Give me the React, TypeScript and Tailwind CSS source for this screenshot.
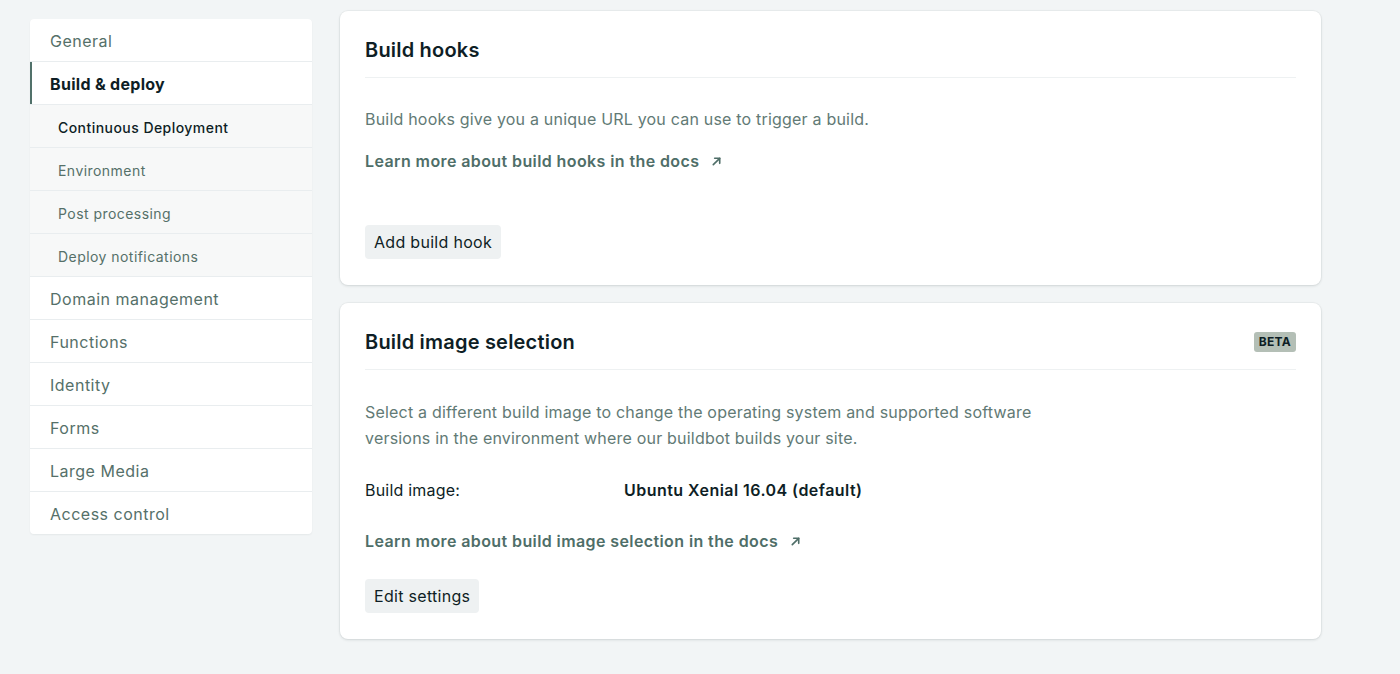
import React from 'react';

interface NavItem {
    label: string;
    sub?: boolean;
    active?: boolean;
    current?: boolean;
}

const navItems: NavItem[] = [
    { label: 'General' },
    { label: 'Build & deploy', active: true },
    { label: 'Continuous Deployment', sub: true, current: true },
    { label: 'Environment', sub: true },
    { label: 'Post processing', sub: true },
    { label: 'Deploy notifications', sub: true },
    { label: 'Domain management' },
    { label: 'Functions' },
    { label: 'Identity' },
    { label: 'Forms' },
    { label: 'Large Media' },
    { label: 'Access control' },
];

const ArrowIcon: React.FC = () => (
    <svg className="w-[11px] h-[11px] ml-[12px] inline-block" viewBox="0 0 12 12" fill="none" stroke="currentColor" strokeWidth={1.8} strokeLinecap="round" strokeLinejoin="round">
        <path d="M2.5 9.5L9.5 2.5" />
        <path d="M4 2.5h5.5V8" />
    </svg>
);

const Card: React.FC<{ title: string; badge?: string; children: React.ReactNode }> = ({ title, badge, children }) => (
    <section className="bg-white rounded-lg shadow-[0_1px_3px_rgba(14,30,37,0.12),0_0_0_1px_rgba(14,30,37,0.03)] px-[25px] pb-[26px]">
        <header className="flex items-center justify-between h-[67px] border-b border-[#eef1f2]">
            <h2 className="text-[20px] font-semibold text-[#0e1e25] pt-[11px] tracking-[0.2px]">{title}</h2>
            {badge && (
                <span className="mt-[11px] bg-[#b4bfb6] text-[#0e1e25] text-[12px] font-bold tracking-wide px-[5px] h-[20px] leading-[20px] rounded-[3px]">{badge}</span>
            )}
        </header>
        {children}
    </section>
);

export default function App() {
    return (
        <div className="min-h-[674px] bg-[#f2f5f6] font-['Inter',sans-serif] flex items-start gap-[28px] pl-[30px] pt-[11px] pb-[34px]">
            <nav className="w-[282px] mt-[8px] bg-[#e9edef] rounded-[4px] shadow-[0_1px_2px_rgba(14,30,37,0.06)] flex flex-col gap-px overflow-hidden">
                {navItems.map((item) => (
                    <div
                        key={item.label}
                        className={`h-[42px] pt-[2px] flex items-center ${item.sub ? 'bg-[#f7f8f8] pl-[28px] text-[14px] tracking-[0.45px]' : 'bg-white pl-[20px] text-[16px] tracking-[0.5px]'} ${item.active ? 'border-l-2 border-[#51716a] !pl-[18px] font-bold text-[#0e1e25] !tracking-[0.3px]' : ''} ${item.current ? 'text-[#0e1e25] font-medium' : ''} ${!item.active && !item.current ? 'text-[#557069]' : ''}`}
                    >
                        {item.label}
                    </div>
                ))}
            </nav>

            <main className="w-[981px] flex flex-col gap-[18px]">
                <Card title="Build hooks">
                    <p className="mt-[28px] text-[16px] leading-[26px] text-[#627a75] tracking-[0.2px]">Build hooks give you a unique URL you can use to trigger a build.</p>
                    <a className="mt-[17px] flex items-center text-[16px] font-semibold text-[#4f6e68] tracking-[0.4px]">
                        Learn more about build hooks in the docs
                        <ArrowIcon />
                    </a>
                    <button className="mt-[52px] h-[34px] px-[9px] rounded-[4px] bg-[#eef1f2] text-[16px] text-[#0e1e25] tracking-[0.3px]">Add build hook</button>
                </Card>

                <Card title="Build image selection" badge="BETA">
                    <p className="mt-[29px] text-[16px] leading-[26px] text-[#627a75] max-w-[700px] tracking-[0.2px]">
                        Select a different build image to change the operating system and supported software versions in the environment where our buildbot builds your site.
                    </p>
                    <div className="mt-[27px] flex items-center text-[16px] text-[#0e1e25]">
                        <span className="w-[259px] tracking-[0.2px]">Build image:</span>
                        <span className="font-semibold tracking-[0.45px]">Ubuntu Xenial 16.04 (default)</span>
                    </div>
                    <a className="mt-[27px] flex items-center text-[16px] font-semibold text-[#4f6e68] tracking-[0.4px]">
                        Learn more about build image selection in the docs
                        <ArrowIcon />
                    </a>
                    <button className="mt-[26px] h-[34px] px-[9px] rounded-[4px] bg-[#eef1f2] text-[16px] text-[#0e1e25] tracking-[0.3px]">Edit settings</button>
                </Card>
            </main>
        </div>
    );
}
